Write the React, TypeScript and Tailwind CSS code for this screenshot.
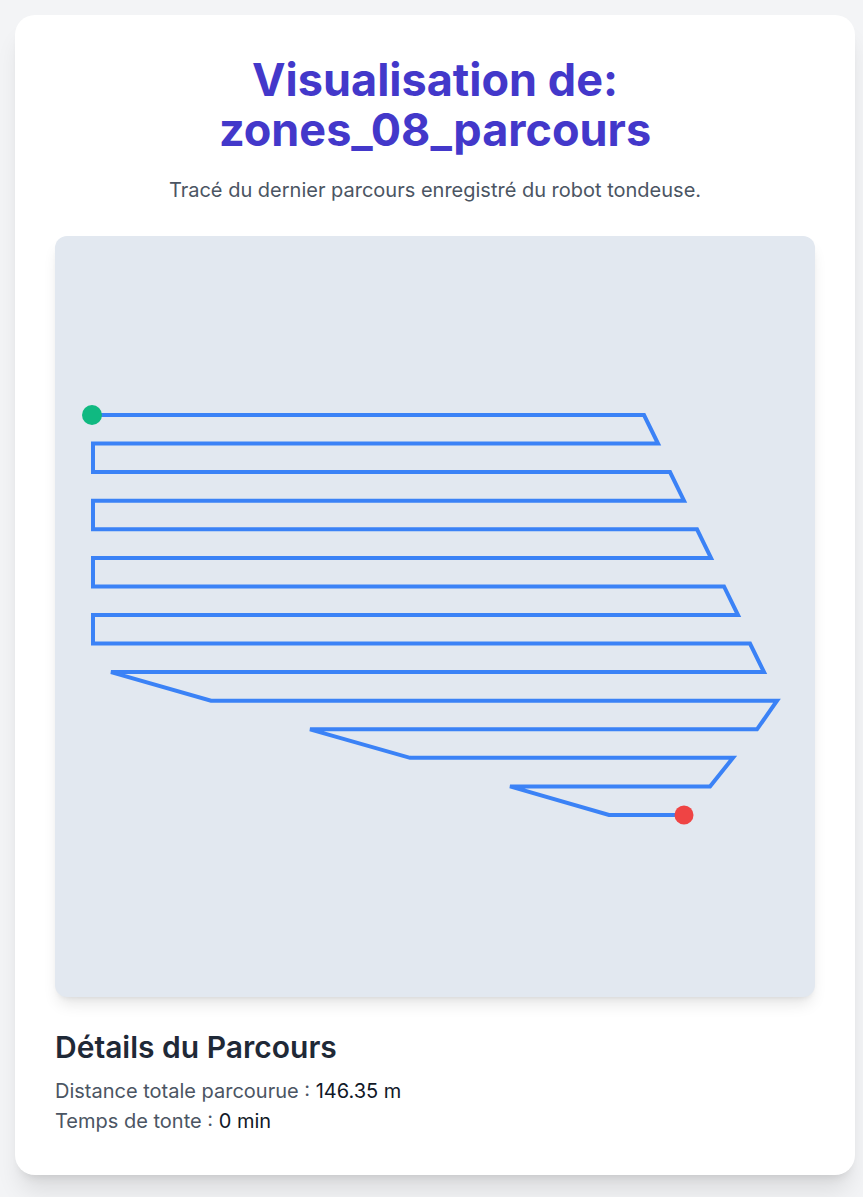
import React from 'react'

const ROW_H = 28.57
const rowY = (i: number) => 179 + i * ROW_H

// trace points, in canvas coordinates (canvas is 760 x 761)
const points: [number, number][] = [
  [37, rowY(0)],
  [589, rowY(0)],
  [603, rowY(1)],
  [38, rowY(1)],
  [38, rowY(2)],
  [615, rowY(2)],
  [629, rowY(3)],
  [38, rowY(3)],
  [38, rowY(4)],
  [642, rowY(4)],
  [656, rowY(5)],
  [38, rowY(5)],
  [38, rowY(6)],
  [669, rowY(6)],
  [683, rowY(7)],
  [38, rowY(7)],
  [38, rowY(8)],
  [695, rowY(8)],
  [709, rowY(9)],
  [56, rowY(9)],
  [156, rowY(10)],
  [722, rowY(10)],
  [702, rowY(11)],
  [255, rowY(11)],
  [355, rowY(12)],
  [678, rowY(12)],
  [655, rowY(13)],
  [455, rowY(13)],
  [554, rowY(14)],
  [629, rowY(14)],
]

function PathCanvas() {
  const d = points.map(([x, y], i) => `${i === 0 ? 'M' : 'L'}${x} ${y.toFixed(1)}`).join(' ')
  const start = points[0]
  const end = points[points.length - 1]
  return (
    <div className="w-[760px] h-[761px] bg-[#e2e8f0] rounded-xl shadow-lg overflow-hidden">
      <svg width="760" height="761" viewBox="0 0 760 761">
        <path d={d} fill="none" stroke="#3b82f6" strokeWidth={4} strokeLinejoin="miter" />
        <circle cx={start[0]} cy={start[1]} r={10} fill="#10b981" />
        <circle cx={end[0]} cy={end[1]} r={9.5} fill="#ef4444" />
      </svg>
    </div>
  )
}

export default function App() {
  return (
    <div className="min-h-[1197px] bg-[#f3f4f6] pt-[15px] pl-[15px] pb-[22px] font-['Inter',sans-serif]">
      <div className="w-[840px] bg-white rounded-[20px] shadow-xl p-10">
        <h1 className="text-center text-[45px] leading-[50px] font-bold text-[#4338ca]">
          Visualisation de:
          <br />
          zones_08_parcours
        </h1>
        <p className="mt-[21px] text-center text-xl text-[#4b5563]">
          Tracé du dernier parcours enregistré du robot tondeuse.
        </p>
        <div className="mt-8">
          <PathCanvas />
        </div>
        <div className="mt-8">
          <h2 className="text-3xl leading-9 font-semibold text-[#1f2937]">Détails du Parcours</h2>
          <p className="mt-3 text-xl text-[#4b5563]">
            Distance totale parcourue : <span className="text-[#111827]">146.35 m</span>
          </p>
          <p className="mt-0.5 text-xl text-[#4b5563]">
            Temps de tonte : <span className="text-[#111827]">0 min</span>
          </p>
        </div>
      </div>
    </div>
  )
}
